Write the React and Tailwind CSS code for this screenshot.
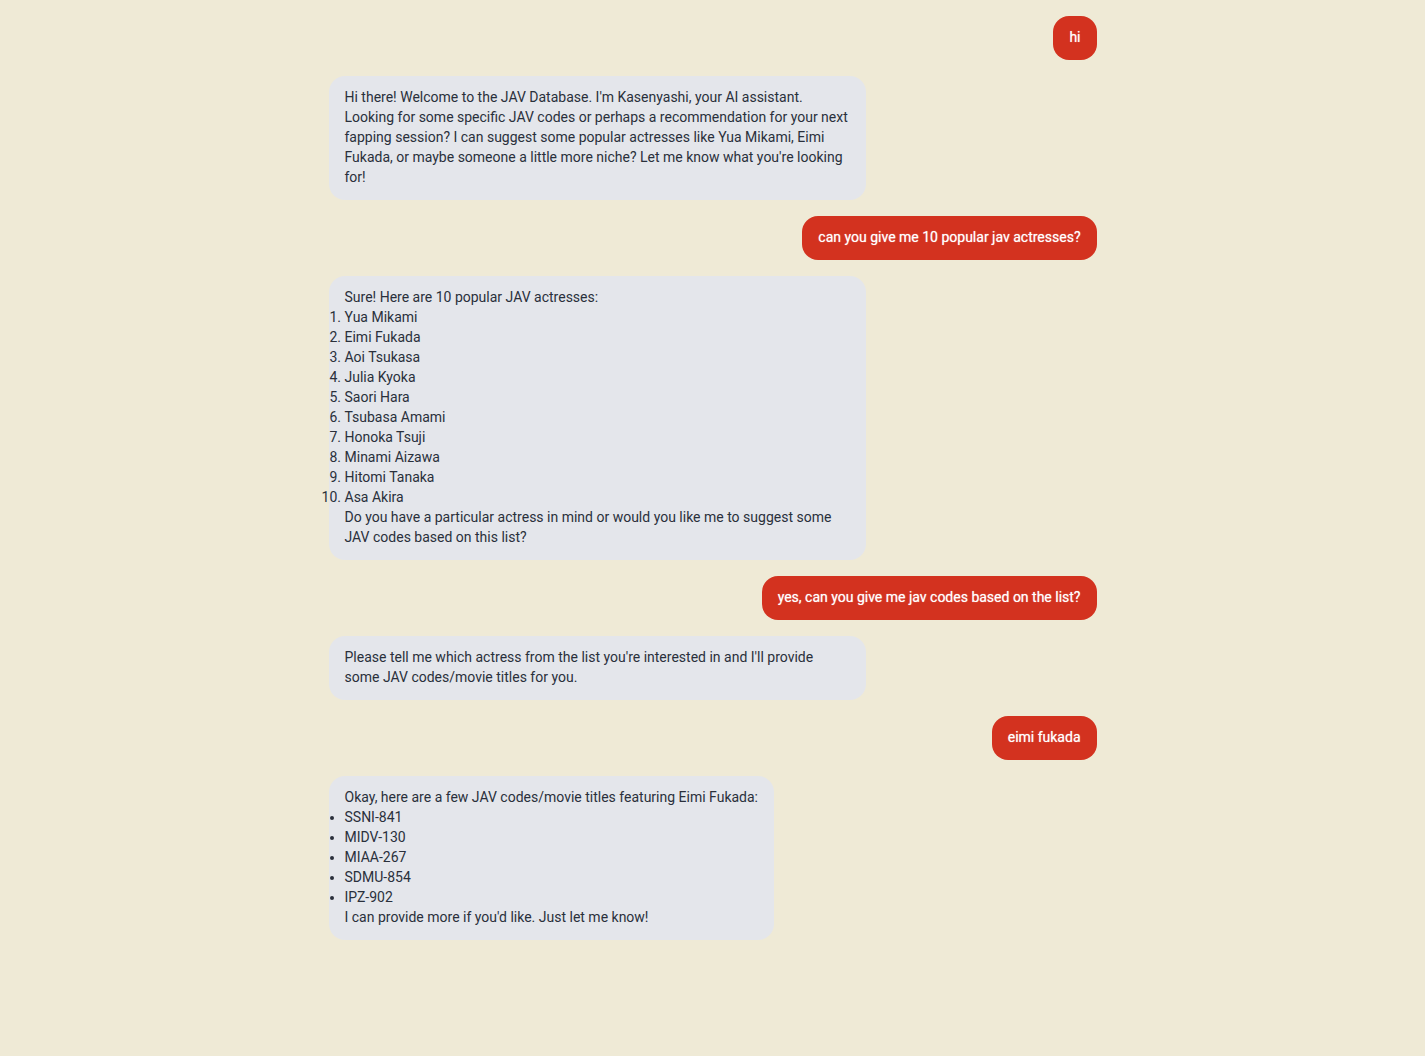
const userBubble =
  "max-w-[70%] self-end rounded-2xl bg-[#d3321f] px-4 pt-[11px] pb-[13px] text-white [text-shadow:0_0_1px_#ffffffb3]";
const botBubble =
  "max-w-[70%] self-start rounded-2xl bg-[#e4e6eb] px-4 pt-[11px] pb-[13px] text-[#2a303b]";

const actresses = [
  "Yua Mikami",
  "Eimi Fukada",
  "Aoi Tsukasa",
  "Julia Kyoka",
  "Saori Hara",
  "Tsubasa Amami",
  "Honoka Tsuji",
  "Minami Aizawa",
  "Hitomi Tanaka",
  "Asa Akira",
];

const codes = ["SSNI-841", "MIDV-130", "MIAA-267", "SDMU-854", "IPZ-902"];

function User({ children }) {
  return (
    <div className={userBubble}>
      <p>{children}</p>
    </div>
  );
}

function Bot({ children }) {
  return <div className={botBubble}>{children}</div>;
}

export default function App() {
  return (
    <main className="min-h-screen bg-[#efead6] px-4 py-4 font-['Roboto',sans-serif] text-sm">
      <div className="mx-auto flex max-w-3xl flex-col gap-4">
        <User>hi</User>
        <Bot>
          <p>
            Hi there! Welcome to the JAV Database. I'm Kasenyashi, your AI assistant. Looking for
            some specific JAV codes or perhaps a recommendation for your next fapping session? I can
            suggest some popular actresses like Yua Mikami, Eimi Fukada, or maybe someone a little
            more niche? Let me know what you're looking for!
          </p>
        </Bot>
        <User>can you give me 10 popular jav actresses?</User>
        <Bot>
          <p>Sure! Here are 10 popular JAV actresses:</p>
          <ol className="list-decimal">
            {actresses.map((name) => (
              <li key={name}>{name}</li>
            ))}
          </ol>
          <p>
            Do you have a particular actress in mind or would you like me to suggest some JAV codes
            based on this list?
          </p>
        </Bot>
        <User>yes, can you give me jav codes based on the list?</User>
        <Bot>
          <p>
            Please tell me which actress from the list you're interested in and I'll provide some
            JAV codes/movie titles for you.
          </p>
        </Bot>
        <User>eimi fukada</User>
        <Bot>
          <p>Okay, here are a few JAV codes/movie titles featuring Eimi Fukada:</p>
          <ul className="list-disc">
            {codes.map((code) => (
              <li key={code}>{code}</li>
            ))}
          </ul>
          <p>I can provide more if you'd like. Just let me know!</p>
        </Bot>
      </div>
    </main>
  );
}
